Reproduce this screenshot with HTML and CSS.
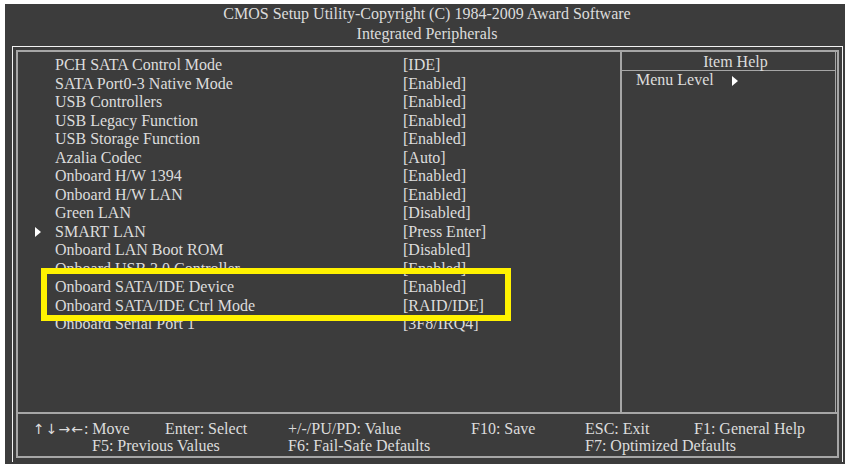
FILE: index.html
```html
<!DOCTYPE html>
<html>
<head>
<meta charset="UTF-8">
  <meta name="viewport" content="width=device-width, initial-scale=1.0">
  <title>CMOS Setup Utility</title>
  <link rel="stylesheet" href="styles.css">
</head>
<body>
<div id="screen">
  <div id="title">
    <p>CMOS Setup Utility-Copyright (C) 1984-2009 Award Software</p>
    <p>Integrated Peripherals</p>
  </div>

  <div id="frame">
    <div id="inner">
      <div id="main">
        <div id="list">
          <div class="row"><span class="mark"></span><span class="label">PCH SATA Control Mode</span><span class="value">[IDE]</span></div>
          <div class="row"><span class="mark"></span><span class="label">SATA Port0-3 Native Mode</span><span class="value">[Enabled]</span></div>
          <div class="row"><span class="mark"></span><span class="label">USB Controllers</span><span class="value">[Enabled]</span></div>
          <div class="row"><span class="mark"></span><span class="label">USB Legacy Function</span><span class="value">[Enabled]</span></div>
          <div class="row"><span class="mark"></span><span class="label">USB Storage Function</span><span class="value">[Enabled]</span></div>
          <div class="row"><span class="mark"></span><span class="label">Azalia Codec</span><span class="value">[Auto]</span></div>
          <div class="row"><span class="mark"></span><span class="label">Onboard H/W 1394</span><span class="value">[Enabled]</span></div>
          <div class="row"><span class="mark"></span><span class="label">Onboard H/W LAN</span><span class="value">[Enabled]</span></div>
          <div class="row"><span class="mark"></span><span class="label">Green LAN</span><span class="value">[Disabled]</span></div>
          <div class="row"><span class="mark"><i class="tri"></i></span><span class="label">SMART LAN</span><span class="value">[Press Enter]</span></div>
          <div class="row"><span class="mark"></span><span class="label">Onboard LAN Boot ROM</span><span class="value">[Disabled]</span></div>
          <div class="row"><span class="mark"></span><span class="label">Onboard USB 3.0 Controller</span><span class="value">[Enabled]</span></div>
          <div class="row"><span class="mark"></span><span class="label">Onboard SATA/IDE Device</span><span class="value">[Enabled]</span></div>
          <div class="row"><span class="mark"></span><span class="label">Onboard SATA/IDE Ctrl Mode</span><span class="value">[RAID/IDE]</span></div>
          <div class="row"><span class="mark"></span><span class="label">Onboard Serial Port 1</span><span class="value">[3F8/IRQ4]</span></div>

          <!-- highlight box drawn over the two SATA rows -->
          <div id="hilite"></div>
        </div>

        <div id="help">
          <div id="help_head">Item Help</div>
          <div id="help_body">Menu Level <i class="tri small"></i></div>
        </div>
      </div>

      <div id="keys">
        <div class="keyline">
          <span class="k1"><span class="arrows">↑↓→←</span>: Move</span>
          <span class="k2">Enter: Select</span>
          <span class="k3">+/-/PU/PD: Value</span>
          <span class="k4">F10: Save</span>
          <span class="k5">ESC: Exit</span>
          <span>F1: General Help</span>
        </div>
        <div class="keyline second">
          <span class="w1">F5: Previous Values</span>
          <span class="w2">F6: Fail-Safe Defaults</span>
          <span>F7: Optimized Defaults</span>
        </div>
      </div>
    </div>
  </div>
</div>
</body>
</html>
```

FILE: styles.css
```css
/* bios screen */
body {
  margin: 0;
  padding: 0;
  background: #fff;
  font-family: "Liberation Serif", "Times New Roman", serif;
  font-size: 16px;
  color: #dcdcdc;
}

#screen {
  margin: 4px 0 0 5px;
  width: 840px;
  height: 460px;
  background: #3c3c3c;
  overflow: hidden;
}

#title {
  height: 42px;
  text-align: center;
  padding-left: 4px;
}
#title p {
  margin: 0;
  line-height: 20px;
}

#frame {
  margin-left: 7px;
  width: 823px;
  border: 1px solid #f2f2f2;
  border-bottom: none;
  padding: 3px 3px 4px 3px;
}

#inner {
  border: 2px solid #a6a6a6;
  height: 404px;
  display: flex;
  flex-direction: column;
}

#main {
  display: flex;
  height: 360px;
  border-bottom: 2px solid #a6a6a6;
}

#list {
  position: relative;
  width: 602px;
  padding-top: 4px;
  border-right: 2px solid #a6a6a6;
}

.row {
  display: flex;
  height: 18.5px;
  line-height: 18.5px;
  white-space: nowrap;
}
.mark {
  width: 37px;
  position: relative;
}
.label {
  width: 348px;
}

.tri {
  display: inline-block;
  width: 0;
  height: 0;
  border-top: 5px solid transparent;
  border-bottom: 5px solid transparent;
  border-left: 6px solid #fff;
}
.mark .tri {
  position: absolute;
  left: 17px;
  top: 4px;
}
.tri.small {
  margin-left: 14px;
  vertical-align: -1px;
}

#hilite {
  position: absolute;
  left: 23px;
  top: 216px;
  width: 458px;
  height: 41px;
  border: 6px solid #fff200;
}

#help {
  flex: 1;
  margin-right: 1px;
  border-right: 1px solid #a6a6a6;
}
#help_head {
  height: 18px;
  line-height: 19px;
  text-align: center;
  padding-left: 14px;
  border-bottom: 1px solid #a6a6a6;
}
#help_body {
  padding-left: 14px;
  line-height: 18px;
}

#keys {
  padding: 6px 0 0 15px;
}
.keyline {
  display: flex;
  height: 17px;
  line-height: 17px;
  white-space: nowrap;
}
.arrows {
  font-family: "DejaVu Sans", sans-serif;
  font-size: 14px;
  letter-spacing: 1px;
}
.k1 { width: 132px; }
.k2 { width: 123px; }
.k3 { width: 183px; }
.k4 { width: 114px; }
.k5 { width: 109px; }
.second { padding-left: 59px; }
.w1 { width: 196px; }
.w2 { width: 297px; }
```
